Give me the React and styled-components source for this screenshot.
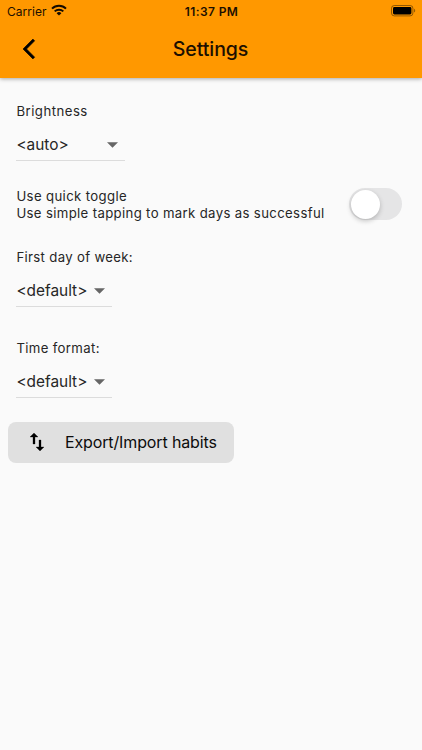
import { useState } from "react";
import styled, { createGlobalStyle } from "styled-components";

export default function App() {
  const [quickToggle, setQuickToggle] = useState(false);

  return (
    <Screen>
      <GlobalStyle />
      <Header>
        <StatusBar>
          <Carrier>
            <CarrierName>Carrier</CarrierName>
            <WifiIcon />
          </Carrier>
          <Clock>11:37 PM</Clock>
          <BatteryIcon />
        </StatusBar>
        <NavBar>
          <BackButton aria-label="Back">
            <svg width="24" height="24" viewBox="0 0 24 24">
              <path
                d="M11.67 3.87L9.9 2.1 0 12l9.9 9.9 1.77-1.77L3.54 12z"
                stroke="#000"
                strokeWidth="0.6"
              />
            </svg>
          </BackButton>
          <Title>Settings</Title>
        </NavBar>
      </Header>

      <Content>
        <Field $height={85}>
          <Label $spacing={0.48}>Brightness</Label>
          <Dropdown value="<auto>" width={109} />
        </Field>

        <ToggleRow>
          <div>
            <ToggleText $spacing={0.36}>Use quick toggle</ToggleText>
            <ToggleText $spacing={0.34}>
              Use simple tapping to mark days as successful
            </ToggleText>
          </div>
          <Switch
            role="switch"
            aria-checked={quickToggle}
            onClick={() => setQuickToggle(!quickToggle)}
          >
            <Thumb $on={quickToggle} />
          </Switch>
        </ToggleRow>

        <Field $height={91}>
          <Label $spacing={0.32}>First day of week:</Label>
          <Dropdown value="<default>" width={96} />
        </Field>
        <Field $height={83}>
          <Label $spacing={0.34}>Time format:</Label>
          <Dropdown value="<default>" width={96} />
        </Field>

        <ExportButton>
          <svg width="24" height="24" viewBox="0 0 24 24">
            <path
              d="M16 17.01V10h-2v7.01h-3L15 21l4-3.99h-3zM9 3L5 6.99h3V14h2V6.99h3L9 3z"
              stroke="#000"
              strokeWidth="0.3"
            />
          </svg>
          <ExportText>Export/Import habits</ExportText>
        </ExportButton>
      </Content>
    </Screen>
  );
}

function Dropdown({ value, width }) {
  return (
    <Select $width={width}>
      <SelectValue>{value}</SelectValue>
      <svg width="11" height="6" viewBox="0 0 11 6">
        <path d="M0 0.2h11L5.5 5.7z" fill="#666" />
      </svg>
    </Select>
  );
}

function WifiIcon() {
  return (
    <svg width="16" height="12" viewBox="0 0 16 12">
      <g fill="none" stroke="#140b00" strokeWidth="2">
        <path d="M1 4.6a9.9 9.9 0 0 1 14 0" />
        <path d="M3.7 7.4a6.1 6.1 0 0 1 8.6 0" />
      </g>
      <path d="M8 11.6L5.6 9.2a3.4 3.4 0 0 1 4.8 0z" fill="#140b00" />
    </svg>
  );
}

function BatteryIcon() {
  return (
    <svg width="25" height="12" viewBox="0 0 25 12">
      <rect
        x="0.5"
        y="0.5"
        width="21.4"
        height="10.4"
        rx="2.8"
        fill="none"
        stroke="#000"
        strokeOpacity="0.42"
      />
      <rect x="2" y="2" width="18.4" height="7.4" rx="1.4" fill="#000" />
      <path d="M23.2 3.8v3.8c1.3-.5 1.3-3.3 0-3.8z" fillOpacity="0.5" />
    </svg>
  );
}

const GlobalStyle = createGlobalStyle`
  * {
    box-sizing: border-box;
  }

  body {
    margin: 0;
    background: #fafafa;
    font-family: Inter, "Liberation Sans", sans-serif;
    color: #262626;
  }

  svg {
    display: block;
    flex-shrink: 0;
  }
`;

const Screen = styled.div`
  min-height: 750px;
  background: #fafafa;
`;

const Header = styled.header`
  height: 78px;
  background: #ff9800;
  box-shadow: 0 1px 4px rgba(0, 0, 0, 0.34);
`;

const StatusBar = styled.div`
  display: grid;
  grid-template-columns: 1fr auto 1fr;
  align-items: center;
  height: 21px;
  padding: 0 6px 0 7px;
  color: #1c0f00;

  > svg {
    justify-self: end;
  }
`;

const Carrier = styled.div`
  display: flex;
  align-items: center;
  gap: 4px;
  padding-top: 1px;

  svg {
    margin-top: -2px;
  }
`;

const CarrierName = styled.span`
  font-size: 12px;
  letter-spacing: 0.05px;
`;

const Clock = styled.span`
  padding-top: 1px;
  font-size: 12px;
  font-weight: 600;
  letter-spacing: 0.4px;
`;

const NavBar = styled.div`
  display: grid;
  grid-template-columns: 1fr auto 1fr;
  align-items: center;
  height: 56px;
  padding: 0 23px;
`;

const BackButton = styled.button`
  width: 24px;
  height: 24px;
  padding: 0;
  border: none;
  background: none;

  svg {
    overflow: visible;
  }
`;

const Title = styled.h1`
  margin: 0;
  padding-right: 1px;
  font-size: 19.5px;
  font-weight: 500;
  line-height: 24px;
  letter-spacing: -0.05px;
  color: #1c0f00;
`;

const Content = styled.main`
  padding: 24px 8px 0;
`;

const Field = styled.section`
  height: ${({ $height }) => $height}px;
  padding: 0 8px;
`;

const Label = styled.div`
  height: 18px;
  padding-left: 0.4px;
  font-size: 13.2px;
  line-height: 18px;
  letter-spacing: ${({ $spacing }) => $spacing}px;
  white-space: nowrap;
`;

const Select = styled.div`
  display: flex;
  align-items: center;
  justify-content: space-between;
  width: ${({ $width }) => $width}px;
  height: 33px;
  margin-top: 8px;
  padding: 1px 7px 0 0.4px;
  border-bottom: 1px solid #dcdcdc;
`;

const SelectValue = styled.span`
  font-size: 15.4px;
  line-height: 21px;
`;

const ToggleRow = styled.section`
  display: flex;
  align-items: flex-start;
  justify-content: space-between;
  height: 61px;
  padding: 0 12px 0 8px;
`;

const ToggleText = styled(Label)`
  height: 17px;
`;

const Switch = styled.button`
  width: 53px;
  height: 32px;
  margin-top: 1px;
  padding: 1px;
  border: none;
  border-radius: 16px;
  background: #e5e5e6;
`;

const Thumb = styled.span`
  display: block;
  width: 29px;
  height: 29px;
  margin-left: ${({ $on }) => ($on ? 21 : 0.5)}px;
  border-radius: 50%;
  background: #fff;
  box-shadow: 0 2px 5px rgba(0, 0, 0, 0.22);
`;

const ExportButton = styled.button`
  display: flex;
  align-items: center;
  gap: 16px;
  width: 225.5px;
  height: 40.5px;
  padding: 0 0 1px 17px;
  border: none;
  border-radius: 8px;
  background: #e0e0e0;
  color: #0c0c0c;
  font-family: inherit;
`;

const ExportText = styled.span`
  font-size: 16px;
  line-height: 20px;
  letter-spacing: -0.13px;
  white-space: nowrap;
`;
